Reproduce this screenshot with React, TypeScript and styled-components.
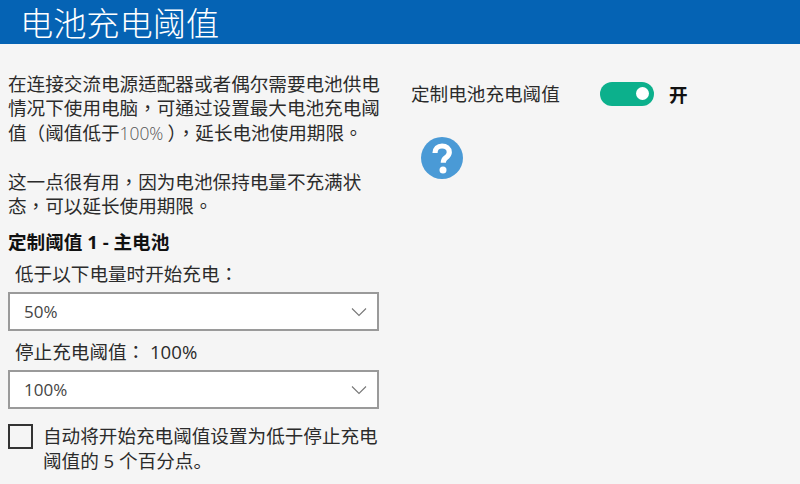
import React from 'react';
import styled, { createGlobalStyle } from 'styled-components';

const GlobalStyle = createGlobalStyle`
  html, body {
    margin: 0;
    padding: 0;
    background: #f5f5f5;
  }
  body {
    font-family: 'Open Sans', 'Noto Sans CJK SC', sans-serif;
    color: #2b2b2b;
    overflow: hidden;
  }
`;

const Page = styled.div`
  width: 800px;
  height: 484px;
  overflow: hidden;
`;

const Header = styled.header`
  box-sizing: border-box;
  height: 44px;
  background: #0563b4;
  color: #fff;
  padding: 4px 0 0 20px;
  display: flex;
  align-items: center;
`;

const Title = styled.h1`
  margin: 0;
  font-size: 33.2px;
  font-weight: 300;
  line-height: 40px;
`;

const Content = styled.main`
  display: flex;
  padding: 28px 0 0 8px;
`;

const LeftColumn = styled.section`
  width: 372px;
  flex: none;
`;

const RightColumn = styled.section`
  margin-left: 31px;
`;

// the TC face draws full-width punctuation centred, like the original UI font
const Paragraph = styled.p`
  margin: 0 0 25px;
  font-family: 'Open Sans', 'Noto Sans CJK TC', sans-serif;
  font-size: 18.6px;
  line-height: 24.3px;
  white-space: nowrap;
`;

const Percent = styled.span`
  font-size: 17.4px;
  font-weight: 300;
  color: #555;
  padding-right: 4px;
`;

const GroupHeading = styled.h2`
  margin: -12px 0 0;
  font-size: 18.6px;
  line-height: 22px;
  font-weight: 700;
  color: #111;
`;

const FieldLabel = styled.div`
  padding-left: 7px;
  margin-top: 9px;
  font-family: 'Open Sans', 'Noto Sans CJK TC', sans-serif;
  font-size: 18.6px;
  line-height: 24px;
`;

const Combo = styled.div`
  box-sizing: border-box;
  width: 371px;
  height: 39px;
  margin-top: 6px;
  padding: 0 10px 0 14px;
  display: flex;
  align-items: center;
  justify-content: space-between;
  background: #fff;
  border: 2px solid #9a9a9a;
  font-size: 17px;
  color: #444;
`;

const CheckRow = styled.div`
  display: flex;
  margin-top: 15px;
`;

const CheckBox = styled.div`
  box-sizing: border-box;
  flex: none;
  width: 25px;
  height: 25px;
  border: 2px solid #333;
`;

const CheckText = styled.div`
  margin-left: 10px;
  font-size: 18.6px;
  line-height: 24.5px;
  white-space: nowrap;
`;

const ToggleRow = styled.div`
  display: flex;
  align-items: center;
  margin-top: 8px;
`;

const ToggleLabel = styled.span`
  width: 189px;
  font-size: 18.6px;
  line-height: 24px;
`;

const Toggle = styled.div`
  box-sizing: border-box;
  width: 54px;
  height: 24px;
  border-radius: 12px;
  background: #0cb08c;
  display: flex;
  align-items: center;
  justify-content: flex-end;
  padding-right: 5px;
`;

const Knob = styled.div`
  width: 13px;
  height: 13px;
  border-radius: 50%;
  background: #fff;
`;

const ToggleState = styled.span`
  margin-left: 15px;
  font-size: 18.6px;
  font-weight: 700;
  color: #111;
`;

const HelpIcon = styled.svg`
  display: block;
  margin: 30px 0 0 10px;
`;

const Chevron = () => (
  <svg width="16" height="10" viewBox="0 0 16 10" fill="none">
    <path d="M1 1.5 L8 8.5 L15 1.5" stroke="#777" strokeWidth="1.1" />
  </svg>
);

export default function App() {
  return (
    <Page>
      <GlobalStyle />
      <Header>
        <Title>电池充电阈值</Title>
      </Header>
      <Content>
        <LeftColumn>
          <Paragraph>
            在连接交流电源适配器或者偶尔需要电池供电
            <br />
            情况下使用电脑，可通过设置最大电池充电阈
            <br />
            值（阈值低于<Percent>100%</Percent>），延长电池使用期限。
          </Paragraph>
          <Paragraph>
            这一点很有用，因为电池保持电量不充满状
            <br />
            态，可以延长使用期限。
          </Paragraph>
          <GroupHeading>定制阈值 1 - 主电池</GroupHeading>
          <FieldLabel>低于以下电量时开始充电：</FieldLabel>
          <Combo>
            <span>50%</span>
            <Chevron />
          </Combo>
          <FieldLabel>停止充电阈值： 100%</FieldLabel>
          <Combo>
            <span>100%</span>
            <Chevron />
          </Combo>
          <CheckRow>
            <CheckBox />
            <CheckText>
              自动将开始充电阈值设置为低于停止充电
              <br />
              阈值的 5 个百分点。
            </CheckText>
          </CheckRow>
        </LeftColumn>
        <RightColumn>
          <ToggleRow>
            <ToggleLabel>定制电池充电阈值</ToggleLabel>
            <Toggle>
              <Knob />
            </Toggle>
            <ToggleState>开</ToggleState>
          </ToggleRow>
          <HelpIcon width="42" height="42" viewBox="0 0 42 42">
            <circle cx="21" cy="21" r="21" fill="#4a9ad6" />
            <path
              d="M14 16 C14 11.5 17 9 21 9 C25.2 9 28.3 11.5 28.3 15.3 C28.3 18.1 26.7 19.5 24.7 20.9 C23 22.1 22.3 22.9 22.3 25.8"
              fill="none"
              stroke="#fff"
              strokeWidth="5.2"
            />
            <circle cx="22" cy="33" r="3.5" fill="#fff" />
          </HelpIcon>
        </RightColumn>
      </Content>
    </Page>
  );
}
